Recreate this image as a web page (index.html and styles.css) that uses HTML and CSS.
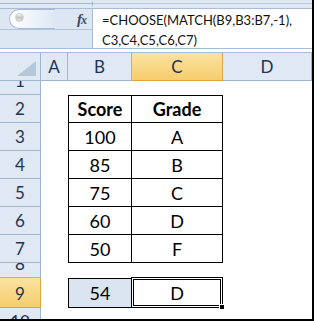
FILE: index.html
```html
<!DOCTYPE html>
<html lang="en">

<head>
    <meta charset="UTF-8">
    <title>CHOOSE MATCH</title>
    <link rel="stylesheet" href="styles.css">
</head>

<body>
    <div class="frame">
        <div class="topbar">
            <div class="topbar-left"></div>
            <div class="topbar-right"></div>
        </div>
        <div class="formula">
            <div class="fx-panel">
                <div class="fx-top">
                    <span class="namecap"><span class="dot"></span></span>
                    <span class="fx">f<span class="fx-x">x</span></span>
                </div>
                <div class="fx-bottom"></div>
            </div>
            <div class="formula-text">=CHOOSE(MATCH(B9,B3:B7,-1),<br>C3,C4,C5,C6,C7)</div>
        </div>
        <div class="sep"></div>

        <div class="sheet">
            <!-- header row -->
            <div class="hd corner"></div>
            <div class="hd col">A</div>
            <div class="hd col">B</div>
            <div class="hd col sel">C</div>
            <div class="hd col">D</div>
            <!-- 1 -->
            <div class="hd row">1</div>
            <div class="c"></div><div class="c"></div><div class="c"></div><div class="c"></div>
            <!-- 2 -->
            <div class="hd row">2</div>
            <div class="c"></div>
            <div class="c t first top left"><b>Score</b></div>
            <div class="c t first top"><b>Grade</b></div>
            <div class="c"></div>
            <!-- 3 -->
            <div class="hd row">3</div>
            <div class="c"></div>
            <div class="c t left">100</div>
            <div class="c t">A</div>
            <div class="c"></div>
            <!-- 4 -->
            <div class="hd row">4</div>
            <div class="c"></div>
            <div class="c t left">85</div>
            <div class="c t">B</div>
            <div class="c"></div>
            <!-- 5 -->
            <div class="hd row">5</div>
            <div class="c"></div>
            <div class="c t left">75</div>
            <div class="c t">C</div>
            <div class="c"></div>
            <!-- 6 -->
            <div class="hd row">6</div>
            <div class="c"></div>
            <div class="c t left">60</div>
            <div class="c t">D</div>
            <div class="c"></div>
            <!-- 7 -->
            <div class="hd row">7</div>
            <div class="c"></div>
            <div class="c t left">50</div>
            <div class="c t">F</div>
            <div class="c"></div>
            <!-- 8 -->
            <div class="hd row">8</div>
            <div class="c"></div><div class="c"></div><div class="c"></div><div class="c"></div>
            <!-- 9 -->
            <div class="hd row sel">9</div>
            <div class="c"></div>
            <div class="c t top left input">54</div>
            <div class="c active">D<span class="handle"></span></div>
            <div class="c"></div>
            <!-- 10 -->
            <div class="hd row">10</div>
            <div class="c"></div><div class="c"></div><div class="c"></div><div class="c"></div>
        </div>
    </div>
</body>

</html>
```

FILE: styles.css
```css
* {
    margin: 0;
    padding: 0;
    box-sizing: border-box;
}

body {
    background: #fff;
}

.frame {
    width: 314px;
    height: 321px;
    border-right: 2px solid #000;
    border-bottom: 2px solid #000;
    overflow: hidden;
    background: #fff;
    font-family: "Lato", "Liberation Sans", sans-serif;
}

/* ribbon edge above formula bar */
.topbar {
    display: flex;
    height: 9px;
    background: #dfe8f3;
    border-bottom: 1px solid #a9bcd3;
}

.topbar-left {
    width: 93px;
    border-right: 1px solid #9fb2c9;
    border-top: 3px solid #dfe8f3;
    border-bottom: 4px solid #dfe8f3;
    background: #a8b8cc;
}

.topbar-right {
    flex: 1;
    border-top: 3px solid #dfe8f3;
    border-bottom: 4px solid #dfe8f3;
    background: #b9c7d8;
}

/* formula bar */
.formula {
    display: flex;
    height: 39px;
}

.fx-panel {
    width: 93px;
    display: flex;
    flex-direction: column;
    background: #dde7f3;
    border-right: 1px solid #a9bcd3;
}

.fx-top {
    height: 21px;
    display: flex;
    align-items: center;
    justify-content: space-between;
    padding: 0 6px 0 9px;
    border-bottom: 1px solid #b4c5da;
}

.namecap {
    width: 46px;
    height: 20px;
    border-radius: 10px 0 0 10px;
    border: 1px solid #a9bcd3;
    border-right: 0;
    background: linear-gradient(90deg, #ffffff 0%, #f1f5fa 45%, #dde7f3 100%);
    display: flex;
    align-items: center;
    padding-left: 5px;
}

.dot {
    width: 9px;
    height: 9px;
    border-radius: 50%;
    background: linear-gradient(#f4f4f4 0%, #c6c6c6 50%, #dedede 100%);
    border: 1px solid #cdcdcd;
    margin-top: -4px;
}

.fx {
    font-family: "Liberation Serif", serif;
    font-style: italic;
    font-weight: bold;
    font-size: 15px;
    color: #3d4a5c;
    letter-spacing: -1px;
}

.fx-x {
    font-size: 12px;
}

.fx-bottom {
    flex: 1;
}

.formula-text {
    flex: 1;
    background: #fff;
    padding: 1px 0 0 9px;
    font-size: 13px;
    line-height: 20px;
    color: #111;
    white-space: nowrap;
}

.sep {
    height: 5px;
    border-top: 1px solid #a9bcd3;
    border-bottom: 1px solid #a9bcd3;
    background: #fafcfe;
}

/* worksheet */
.sheet {
    display: grid;
    grid-template-columns: 41px 27px 64px 91px 89px;
    grid-template-rows: 28px 14px repeat(6, 28px) 15px 30px 28px;
}

.hd {
    background: #dfe8f3;
    border-right: 1px solid #9eb6ce;
    border-bottom: 1px solid #9eb6ce;
    color: #1e3451;
    font-size: 17px;
    display: flex;
    justify-content: center;
    align-items: center;
    overflow: hidden;
}

.hd.row {
    align-items: flex-end;
    line-height: 26px;
}

.hd.sel {
    background: linear-gradient(#fbe3a3, #f6cd6c);
    border-color: #e2a544;
}

.corner {
    position: relative;
}

.corner::after {
    content: "";
    position: absolute;
    right: 4px;
    bottom: 4px;
    width: 19px;
    height: 15px;
    background: #b7c7da;
    clip-path: polygon(100% 0, 100% 100%, 0 100%);
}

.c {
    display: flex;
    justify-content: center;
    align-items: center;
    font-size: 18px;
    color: #000;
    line-height: 28px;
}

.c.t {
    border-right: 1px solid #000;
    border-bottom: 1px solid #000;
}

.c.top {
    border-top: 1px solid #000;
}

.c.left {
    border-left: 1px solid #000;
}

.c.input {
    background: #dbe5f1;
}

.c.active {
    position: relative;
    margin: -1px 0 0 -1px;
    border: 3px double #000;
}

.handle {
    position: absolute;
    right: -5px;
    bottom: -5px;
    width: 6px;
    height: 6px;
    background: #000;
    border: 1px solid #fff;
}
```
